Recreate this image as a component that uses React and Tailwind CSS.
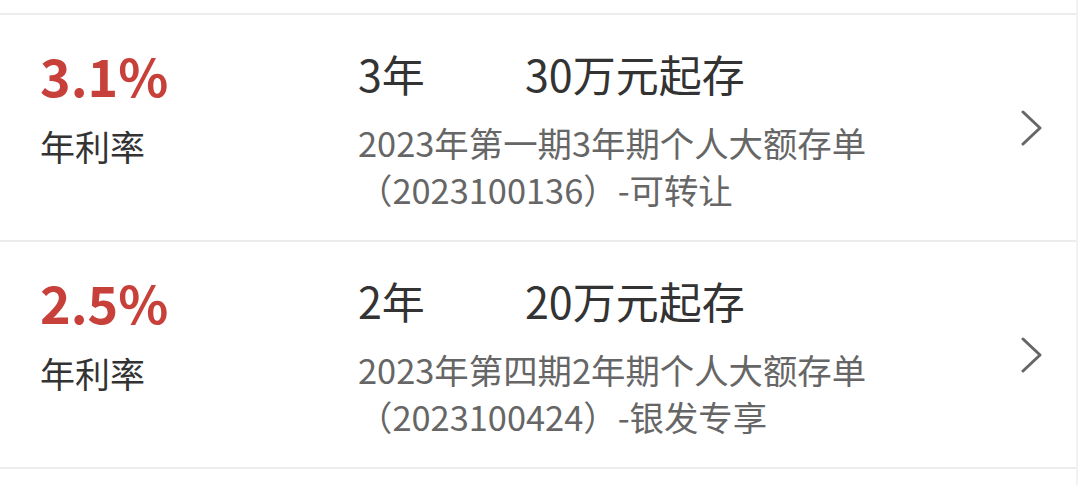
const deposits = [
  {
    rate: '3.1%',
    term: '3年',
    minimum: '30万元起存',
    name: '2023年第一期3年期个人大额存单',
    code: '（2023100136）-可转让',
  },
  {
    rate: '2.5%',
    term: '2年',
    minimum: '20万元起存',
    name: '2023年第四期2年期个人大额存单',
    code: '（2023100424）-银发专享',
  },
];

function Chevron() {
  return (
    <svg width="24" height="36" viewBox="0 0 24 36" fill="none" className="shrink-0">
      <path d="M3 2 L20 18 L3 34" stroke="#666666" strokeWidth="3" strokeLinecap="round" strokeLinejoin="round" />
    </svg>
  );
}

function DepositRow({ item }) {
  return (
    <div className="flex items-center h-[227px] bg-white border-b-2 border-[#ececec]">
      <div className="w-[318px] ml-10 self-start pt-[28px]">
        <div className="text-[52px] leading-[64px] font-bold text-[#c8403a]">{item.rate}</div>
        <div className="text-[35px] leading-[50px] text-[#333333] mt-[14px]">年利率</div>
      </div>
      <div className="flex-1 self-start pt-[32px]">
        <div className="flex text-[43px] leading-[52px] text-[#333333]">
          <span className="w-[167px]">{item.term}</span>
          <span>{item.minimum}</span>
        </div>
        <div className="text-[34.4px] leading-[47px] text-[#666666] mt-[20px]">
          <div>{item.name}</div>
          <div>{item.code}</div>
        </div>
      </div>
      <div className="w-[54px] mr-[2px]">
        <Chevron />
      </div>
    </div>
  );
}

export default function App() {
  return (
    <div
      className="w-[1078px] h-[485px] bg-white overflow-hidden border-r-2 border-[#f2f2f2]"
      style={{ fontFamily: '"Noto Sans CJK SC", "Noto Sans", sans-serif' }}
    >
      <div className="h-[15px] bg-white border-b-2 border-[#ececec]" />
      {deposits.map((item) => (
        <DepositRow key={item.code} item={item} />
      ))}
    </div>
  );
}
